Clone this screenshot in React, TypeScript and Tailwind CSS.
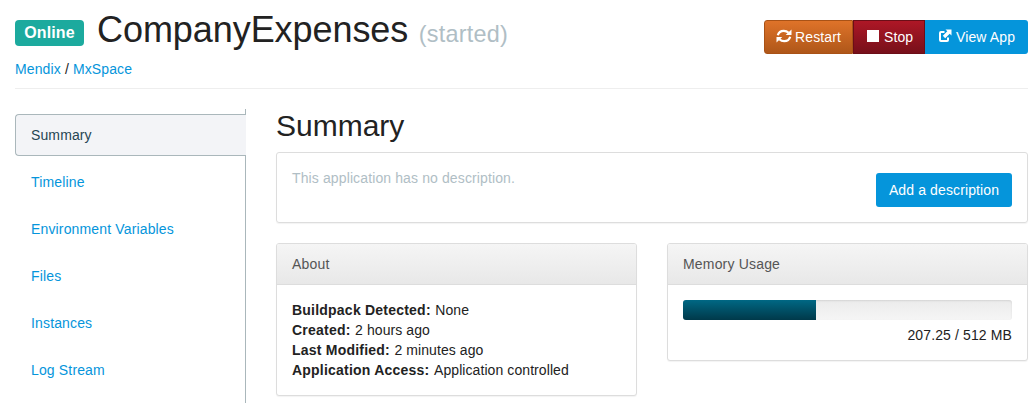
import React from 'react';

function RefreshIcon() {
  return (
    <svg width="16" height="16" viewBox="0 0 16 16" className="mb-[2px] shrink-0">
      <path d="M1.800 7.200C2.600 4.300 4.800 2.800 7.800 2.800c2 0 3.500.7 4.800 2M14.200 8.800C13.400 11.700 11.200 13.200 8.200 13.200c-2 0-3.500-.7-4.800-2" fill="none" stroke="white" strokeWidth="2.200" />
      <path d="M15.500 1.400V7H9.700zM.5 14.600V9h5.800z" fill="white" />
    </svg>
  );
}

function OpenIcon() {
  return (
    <svg width="14" height="14" viewBox="0 0 14 14" className="mb-[2px] shrink-0">
      <path d="M6.500 3H3Q2 3 2 4V11Q2 12 3 12H9Q10 12 10 11V8.500" fill="none" stroke="white" strokeWidth="2" />
      <path d="M7.500.5h6v6l-1.800-1.800-4.500 4.500-2.400-2.400 4.500-4.500z" fill="white" />
    </svg>
  );
}

const links = ['Timeline', 'Environment Variables', 'Files', 'Instances', 'Log Stream'];
const facts = [
  ['Buildpack Detected:', 'None'],
  ['Created:', '2 hours ago'],
  ['Last Modified:', '2 minutes ago'],
  ['Application Access:', 'Application controlled'],
];

function Panel({ title, children }: { title: string; children: React.ReactNode }) {
  return (
    <section className="w-[361px] rounded-[3px] border border-[#dddddd] bg-white shadow-[0_1px_1px_rgba(0,0,0,0.05)]">
      <h3 className="h-[41px] rounded-t-[2px] border-b border-[#dddddd] bg-linear-to-b from-[#f5f5f5] to-[#e8e8e8] px-[15px] pt-[10px] tracking-[0.18px] text-[#555555]">{title}</h3>
      {children}
    </section>
  );
}

export default function App() {
  return (
    <div className="h-[403px] w-[1036px] overflow-hidden bg-white pl-[15px] pr-2 font-['Liberation_Sans',Arial,sans-serif] text-[14px] leading-5 tracking-[0.12px] text-[#222222]">
      <header className="flex h-[89px] justify-between border-b border-[#eeeeee]">
        <div>
          <h1 className="flex h-[59px] items-start">
            <span className="mt-5 flex h-[26px] w-[69px] items-center justify-center rounded-[4px] bg-[#1caa9e] text-[16px] font-bold leading-none text-white">Online</span>
            <span className="ml-[13px] mt-[10px] whitespace-nowrap text-[36px] leading-10 tracking-[-0.06px]">CompanyExpenses</span>
            <span className="ml-[10.500px] mt-[14px] text-[23.400px] leading-10 tracking-[0.25px] text-[#b0bec5]">(started)</span>
          </h1>
          <nav className="text-[#0595db]">Mendix <span className="text-[#222222]">/</span> MxSpace</nav>
        </div>
        <div className="mt-5 flex h-[34px] text-white">
          <button className="flex w-[89px] items-center rounded-l-[3px] border border-[#a95216] bg-linear-to-b from-[#df7329] to-[#af5719] pl-[11px]"><RefreshIcon /><span className="ml-[3px]">Restart</span></button>
          <button className="flex w-[72px] items-center border border-[#6c0e17] bg-linear-to-b from-[#ae1726] to-[#77101a] pl-[13px]"><span className="mb-[2px] h-3 w-3 bg-white" /><span className="ml-[5px]">Stop</span></button>
          <button className="flex w-[103px] items-center rounded-r-[3px] bg-[#0595db] pl-[13px]"><OpenIcon /><span className="ml-1 whitespace-nowrap">View App</span></button>
        </div>
      </header>
      <div className="flex">
        <aside className="mt-5 flex h-[294px] w-[231px] flex-col">
          <div className="h-[5px] shrink-0 border-r border-[#aab7bb]" />
          <a className="h-[42px] shrink-0 rounded-l-[4px] border border-r-0 border-[#aab7bb] bg-[#f3f4f7] pl-[15px] pt-[10px] text-[#264653]">Summary</a>
          <div className="min-h-0 flex-1 border-r border-[#aab7bb] pl-4 pt-4 text-[#0595db]">
            {links.map(link => <a key={link} className="mb-[27px] block tracking-[0.15px]">{link}</a>)}
          </div>
        </aside>
        <main className="ml-[30px] w-[752px]">
          <h2 className="mt-5 h-[43px] text-[30px] leading-[33px] tracking-normal">Summary</h2>
          <section className="flex h-[71px] justify-between rounded-[3px] border border-[#dddddd] px-[15px] pt-[15px] text-[#b0bec5] shadow-[0_1px_1px_rgba(0,0,0,0.05)]">
            <p>This application has no description.</p>
            <button className="mt-[5px] h-[34px] w-[136px] rounded-[3px] bg-[#0595db] text-white">Add a description</button>
          </section>
          <div className="mt-5 flex items-start justify-between">
            <Panel title="About">
              <dl className="h-[110px] px-[15px] pt-[15px]">
                {facts.map(([name, value]) => <div key={name} className="flex gap-[4.500px]"><dt className="font-bold tracking-[0.22px]">{name}</dt><dd className="tracking-[0.08px]">{value}</dd></div>)}
              </dl>
            </Panel>
            <Panel title="Memory Usage">
              <div className="h-[75px] p-[15px]">
                <div className="h-5 overflow-hidden rounded-[3px] bg-linear-to-b from-[#ebebeb] to-[#f5f5f5] shadow-[inset_0_1px_2px_rgba(0,0,0,0.1)]"><div className="h-full w-[133px] bg-linear-to-b from-[#006884] to-[#00394a]" /></div>
                <p className="mt-[5px] text-right">207.25 / 512 MB</p>
              </div>
            </Panel>
          </div>
        </main>
      </div>
    </div>
  );
}
